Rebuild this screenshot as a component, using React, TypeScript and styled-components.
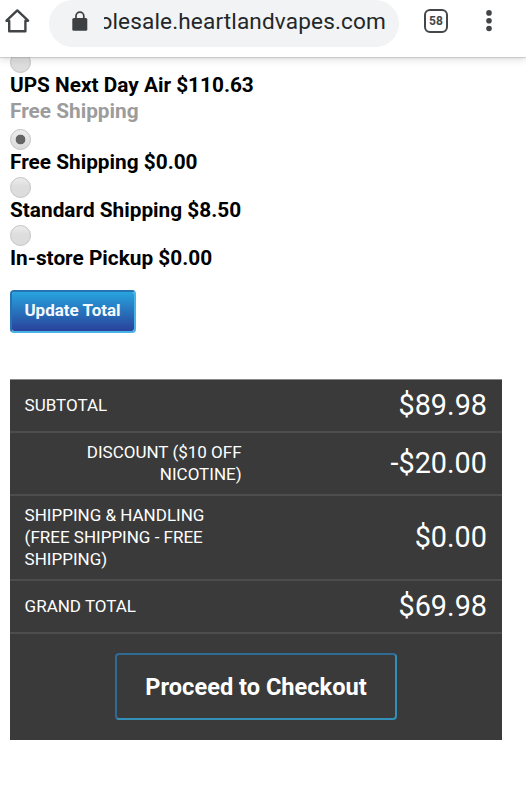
import React from "react";
import styled, { createGlobalStyle } from "styled-components";

const GlobalStyle = createGlobalStyle`
  * { box-sizing: border-box; }
  html, body { margin: 0; background: #fff; }
  body { font-family: Roboto, "Liberation Sans", sans-serif; color: #000; overflow: hidden; }
  button { font-family: inherit; }
`;

const Screen = styled.div`
  width: 526px;
  height: 800px;
  overflow: hidden;
  background: #fff;
`;

const BrowserBar = styled.header`
  position: relative;
  z-index: 1;
  display: flex;
  align-items: flex-start;
  height: 57px;
  background: #fff;
  box-shadow: 0 1px 1px rgba(0, 0, 0, 0.13), 0 3px 7px rgba(0, 0, 0, 0.12);
`;

const HomeIcon = styled.svg`
  flex: none;
  width: 26px;
  height: 26px;
  margin: 8px 18px 0 5px;
`;

const AddressPill = styled.div`
  display: flex;
  align-items: center;
  flex: none;
  width: 350px;
  height: 47px;
  padding: 0 13px 0 23px;
  border-radius: 24px;
  background: #f1f3f4;
`;

const LockIcon = styled.svg`
  flex: none;
  width: 16px;
  height: 20px;
  margin: 0 16px 6px 0;
`;

const Url = styled.div`
  display: flex;
  justify-content: flex-end;
  flex: 1;
  min-width: 0;
  overflow: hidden;
  font-size: 22.6px;
  line-height: 30px;
  letter-spacing: 0.14px;
  white-space: nowrap;
  color: #24272a;
  margin-bottom: 4px;
`;

const TabCount = styled.div`
  flex: none;
  width: 24px;
  height: 24px;
  margin: 9px 0 0 25px;
  border: 2.4px solid #44474a;
  border-radius: 6px;
  font-size: 12px;
  font-weight: 700;
  line-height: 20px;
  text-align: center;
  color: #44474a;
`;

const MenuIcon = styled.svg`
  flex: none;
  width: 8px;
  height: 24px;
  margin: 9px 0 0 37px;
`;

const ShippingForm = styled.main`
  display: flex;
  flex-direction: column;
  align-items: flex-start;
  padding: 0 24px 0 10px;
  margin-top: -5px;
`;

const RadioDot = styled.span<{ $checked?: boolean }>`
  flex: none;
  width: 21px;
  height: 21px;
  border: 1px solid #c2c2c2;
  border-radius: 50%;
  background: ${(p) =>
    p.$checked
      ? "radial-gradient(circle, #646464 0 4.5px, transparent 5.2px), linear-gradient(#ececec, #dadada)"
      : "linear-gradient(#ececec, #dddddd 45%, #dddddd)"};
`;

const OptionLabel = styled.label`
  display: block;
  height: 27px;
  font-size: 20.8px;
  font-weight: 700;
  line-height: 25px;
  white-space: nowrap;
`;

const CarrierTitle = styled(OptionLabel).attrs({ as: "div" })`
  color: #9c9c9c;
  height: 29px;
  line-height: 23px;
`;

const UpdateButton = styled.button`
  width: 126px;
  height: 43px;
  margin: 17px 0 1px;
  padding: 0 1px 3px 0;
  border: 2px solid;
  border-color: #2673b4 #49b3e8 #49b3e8 #2673b4;
  border-radius: 4px;
  background: linear-gradient(#27a4de, #29419a) padding-box;
  font-size: 17px;
  font-weight: 700;
  color: #f4faff;
`;

const Totals = styled.section`
  width: 492px;
  height: 361px;
  margin-top: 45px;
  border-top: 1px solid #898989;
  background: #3a3a3a;
  color: #fff;
`;

const TotalRow = styled.div<{ $height: number }>`
  display: flex;
  justify-content: space-between;
  align-items: center;
  height: ${(p) => p.$height}px;
  padding: 0 15px 0 14.6px;
  border-bottom: 2px solid #4d4d4d;
`;

const TotalName = styled.div<{ $right?: boolean }>`
  width: 217px;
  padding-bottom: 2px;
  font-size: 17px;
  line-height: 22px;
  text-transform: uppercase;
  text-align: ${(p) => (p.$right ? "right" : "left")};
`;

const Amount = styled.div`
  padding-bottom: 2px;
  font-size: 28.8px;
  line-height: 34px;
`;

const CheckoutButton = styled.button`
  display: block;
  width: 282px;
  height: 67px;
  margin: 19px auto 0 105px;
  padding: 0;
  border: 2px solid;
  border-color: #2f6a95 #348fb8 #348fb8 #2f6a95;
  border-radius: 4px;
  background: transparent;
  font-size: 23.6px;
  font-weight: 700;
  color: #fff;
`;

const options = [
  { label: "Free Shipping $0.00", checked: true },
  { label: "Standard Shipping $8.50" },
  { label: "In-store Pickup $0.00" },
];

const totals = [
  { name: ["Subtotal"], amount: "$89.98", height: 53 },
  { name: ["Discount ($10 Off", "Nicotine)"], amount: "-$20.00", height: 63, right: true },
  { name: ["Shipping & Handling", "(Free Shipping - Free", "Shipping)"], amount: "$0.00", height: 85 },
  { name: ["Grand Total"], amount: "$69.98", height: 53 },
];

export default function App() {
  return (
    <Screen>
      <GlobalStyle />
      <BrowserBar>
        <HomeIcon viewBox="0 0 26 26" fill="none" stroke="#424548" strokeWidth="2.4" strokeLinejoin="round">
          <path d="M4.2 12.7H1.5L12.3 2.4L23.1 12.7H20.4V23.3H4.2Z" />
        </HomeIcon>
        <AddressPill>
          <LockIcon viewBox="0 0 16 20">
            <path d="M4 8V5.1a3.9 3.9 0 0 1 7.8 0V8" fill="none" stroke="#3c4043" strokeWidth="1.7" />
            <rect x="0.3" y="7" width="15" height="12.7" rx="1.5" fill="#3c4043" />
          </LockIcon>
          <Url>
            <span>olesale.heartlandvapes.com</span>
          </Url>
        </AddressPill>
        <TabCount>58</TabCount>
        <MenuIcon viewBox="0 0 8 24" fill="#424548">
          <circle cx="4" cy="3.9" r="2.8" />
          <circle cx="4" cy="11.7" r="2.8" />
          <circle cx="4" cy="19.5" r="2.8" />
        </MenuIcon>
      </BrowserBar>
      <ShippingForm>
        <RadioDot />
        <OptionLabel>UPS Next Day Air $110.63</OptionLabel>
        <CarrierTitle>Free Shipping</CarrierTitle>
        {options.map((o) => (
          <React.Fragment key={o.label}>
            <RadioDot $checked={o.checked} />
            <OptionLabel>{o.label}</OptionLabel>
          </React.Fragment>
        ))}
        <UpdateButton>Update Total</UpdateButton>
        <Totals>
          {totals.map((t) => (
            <TotalRow key={t.name[0]} $height={t.height}>
              <TotalName $right={t.right}>
                {t.name.map((line) => (
                  <div key={line}>{line}</div>
                ))}
              </TotalName>
              <Amount>{t.amount}</Amount>
            </TotalRow>
          ))}
          <CheckoutButton>Proceed to Checkout</CheckoutButton>
        </Totals>
      </ShippingForm>
    </Screen>
  );
}
